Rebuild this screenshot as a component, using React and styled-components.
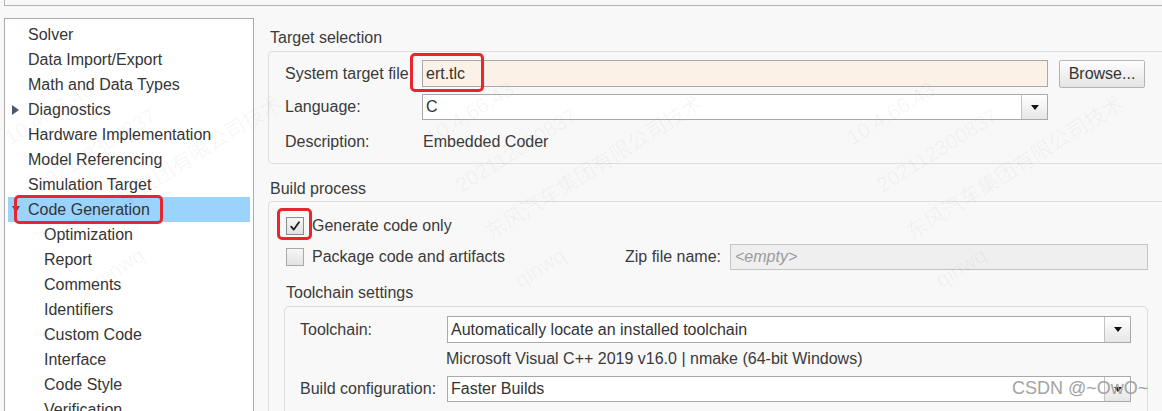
import React from "react";
import styled, { createGlobalStyle } from "styled-components";

const GlobalStyle = createGlobalStyle`
  html, body {
    margin: 0;
    padding: 0;
    background: #f8f8f8;
    overflow: hidden;
  }
  body {
    width: 1162px;
    height: 411px;
    font-family: "Liberation Sans", Arial, sans-serif;
    font-size: 16px;
    color: #3a3a3a;
  }
  #root {
    height: 411px;
    overflow: hidden;
  }
`;

const Page = styled.div`
  position: relative;
  height: 411px;
  overflow: hidden;
  display: flex;
  flex-direction: column;
`;

const TopBar = styled.div`
  flex: none;
  margin-left: 4px;
  width: 1200px;
  height: 5px;
  border: 1px solid #b3b3b3;
  border-top: none;
`;

const Main = styled.div`
  display: flex;
  align-items: flex-start;
`;

/* ---------- tree ---------- */

const Tree = styled.div`
  flex: none;
  box-sizing: border-box;
  margin: 12px 0 0 4px;
  width: 250px;
  height: 440px;
  padding: 3px;
  background: #ffffff;
  border: 1px solid #ababab;
`;

const TreeRow = styled.div`
  position: relative;
  display: flex;
  align-items: center;
  height: 25px;
  padding-left: ${(p) => (p.$child ? 20 : 4)}px;
  background: ${(p) => (p.$selected ? "#9ad3fc" : "transparent")};
  color: #353535;
  white-space: nowrap;
`;

const Twisty = styled.span`
  flex: none;
  display: flex;
  align-items: center;
  width: 16px;
  height: 25px;
  color: #4b5a6b;
`;

const Annotation = styled.div`
  position: absolute;
  box-sizing: border-box;
  border: 3px solid #e8262c;
  border-radius: 5px;
  pointer-events: none;
  z-index: 2;
`;

const RightTri = () => (
  <svg width="7" height="10" viewBox="0 0 7 10">
    <polygon points="0,0 7,5 0,10" fill="currentColor" />
  </svg>
);

const DownTri = () => (
  <svg width="8" height="7" viewBox="0 0 8 7">
    <polygon points="0,0 8,0 4,7" fill="currentColor" />
  </svg>
);

/* ---------- right pane ---------- */

const RightPane = styled.div`
  flex: none;
  width: 960px;
  padding: 22px 0 0 14px;
`;

const SectionTitle = styled.div`
  line-height: 20px;
  padding-left: 2px;
  margin-top: ${(p) => p.$gap || 0}px;
  color: #3a3a3a;
`;

const Group = styled.div`
  margin-top: ${(p) => p.$top || 3}px;
  border: 1px solid #dedede;
  border-radius: 4px;
  padding: ${(p) => p.$pad};
`;

const FormRow = styled.div`
  display: flex;
  align-items: flex-start;
  height: ${(p) => p.$h || 27}px;
  margin-top: ${(p) => p.$gap || 0}px;
`;

const Label = styled.div`
  flex: none;
  width: ${(p) => p.$w}px;
  height: ${(p) => p.$h || 27}px;
  line-height: ${(p) => p.$h || 27}px;
  white-space: nowrap;
  color: #3a3a3a;
`;

const FieldWrap = styled.div`
  position: relative;
  flex: none;
  width: ${(p) => p.$w}px;
`;

const TextInput = styled.div`
  box-sizing: border-box;
  height: 27px;
  line-height: 25px;
  padding-left: 3px;
  border: 1px solid #a9a9a9;
  background: ${(p) => p.$bg || "#ffffff"};
  color: #333;
`;

const Browse = styled.div`
  flex: none;
  box-sizing: border-box;
  margin-left: 11px;
  width: 86px;
  height: 28px;
  line-height: 26px;
  text-align: center;
  border: 1px solid #b5b5b5;
  border-radius: 2px;
  background: linear-gradient(#fefefe, #e4e4e4);
  color: #333;
`;

const SelectBox = styled.div`
  box-sizing: border-box;
  display: flex;
  width: ${(p) => p.$w}px;
  height: ${(p) => p.$h || 26}px;
  border: 1px solid #a9a9a9;
  background: #ffffff;
`;

const SelectValue = styled.div`
  flex: 1;
  padding-left: 3px;
  line-height: ${(p) => (p.$h || 26) - 2}px;
  color: #333;
  white-space: nowrap;
  overflow: hidden;
`;

const ArrowBtn = styled.div`
  flex: none;
  width: 25px;
  display: flex;
  align-items: center;
  justify-content: center;
  border-left: 1px solid #c2c2c2;
  background: linear-gradient(#ffffff, #e6e6e6);
  color: #111;
`;

const SmallArrow = () => (
  <svg width="8" height="5" viewBox="0 0 8 5">
    <polygon points="0,0 8,0 4,5" fill="currentColor" />
  </svg>
);

const Select = ({ value, w, h }) => (
  <SelectBox $w={w} $h={h}>
    <SelectValue $h={h}>{value}</SelectValue>
    <ArrowBtn>
      <SmallArrow />
    </ArrowBtn>
  </SelectBox>
);

const PlainValue = styled.div`
  line-height: 27px;
  padding-left: 1px;
  color: #3a3a3a;
`;

const CheckRow = styled.div`
  display: flex;
  align-items: center;
  width: 864px;
  height: 26px;
  margin-top: ${(p) => p.$gap || 0}px;
  padding-left: 2px;
  box-sizing: border-box;
`;

const CheckWrap = styled.div`
  position: relative;
  flex: none;
  width: 18px;
  height: 18px;
  margin-right: 8px;
`;

const CheckBox = styled.div`
  box-sizing: border-box;
  width: 18px;
  height: 18px;
  border: 1px solid ${(p) => (p.$checked ? "#8c8c8c" : "#a8a8a8")};
  background: linear-gradient(#f6f6f6, #e2e2e2);
  display: flex;
  align-items: center;
  justify-content: center;
`;

const CheckText = styled.span`
  color: #3a3a3a;
  white-space: nowrap;
`;

const ZipGroup = styled.div`
  margin-left: auto;
  display: flex;
  align-items: center;
`;

const ZipLabel = styled.span`
  margin-right: 9px;
  color: #3a3a3a;
`;

const ZipInput = styled.div`
  box-sizing: border-box;
  width: 418px;
  height: 26px;
  line-height: 24px;
  padding-left: 4px;
  border: 1px solid #c4c4c4;
  background: #efefef;
  color: #9b9b9b;
  font-style: italic;
`;

const SubGroup = styled.div`
  margin-top: 3px;
  box-sizing: border-box;
  width: 864px;
  height: 140px;
  border: 1px solid #dcdcdc;
  border-radius: 5px;
  padding: 9px 15px 0 15px;
`;

const InfoText = styled.div`
  margin: 6px 0 7px 146px;
  line-height: 20px;
  color: #3a3a3a;
  white-space: nowrap;
`;

/* ---------- overlays ---------- */

const CsdnMark = styled.div`
  position: absolute;
  left: 1012px;
  top: 377px;
  font-size: 18px;
  line-height: 22px;
  color: #a3a3a3;
  white-space: nowrap;
  pointer-events: none;
  z-index: 5;
`;

const WatermarkTile = styled.div`
  position: absolute;
  left: ${(p) => p.$x}px;
  top: ${(p) => p.$y}px;
  transform: rotate(-32deg);
  transform-origin: 0 0;
  font-family: "Liberation Sans", "Noto Sans CJK SC", sans-serif;
  font-size: 21px;
  line-height: 56px;
  color: rgba(0, 0, 0, 0.045);
  white-space: nowrap;
  pointer-events: none;
  z-index: 4;
`;

const Watermark = ({ x, y }) => (
  <WatermarkTile $x={x} $y={y}>
    <div>10.4.66.43</div>
    <div>202112300837</div>
    <div>东风汽车集团有限公司技术</div>
    <div>qinwq</div>
  </WatermarkTile>
);

const treeItems = [
  { label: "Solver" },
  { label: "Data Import/Export" },
  { label: "Math and Data Types" },
  { label: "Diagnostics", twisty: "right" },
  { label: "Hardware Implementation" },
  { label: "Model Referencing" },
  { label: "Simulation Target" },
  { label: "Code Generation", twisty: "down", selected: true, marked: true },
  { label: "Optimization", child: true },
  { label: "Report", child: true },
  { label: "Comments", child: true },
  { label: "Identifiers", child: true },
  { label: "Custom Code", child: true },
  { label: "Interface", child: true },
  { label: "Code Style", child: true },
  { label: "Verification", child: true },
  { label: "Templates", child: true },
];

export default function App() {
  return (
    <Page>
      <GlobalStyle />
      <TopBar />
      <Main>
        <Tree>
          {treeItems.map((it) => (
            <TreeRow key={it.label} $child={it.child} $selected={it.selected}>
              <Twisty>
                {it.twisty === "right" && <RightTri />}
                {it.twisty === "down" && <DownTri />}
              </Twisty>
              {it.label}
              {it.marked && (
                <Annotation style={{ left: 6, top: -2, width: 149, height: 29 }} />
              )}
            </TreeRow>
          ))}
        </Tree>

        <RightPane>
          <SectionTitle>Target selection</SectionTitle>
          <Group $top={3} $pad="8px 0 8px 16px">
            <FormRow>
              <Label $w={137}>System target file</Label>
              <FieldWrap $w={626}>
                <TextInput $bg="#fcf1e6">ert.tlc</TextInput>
                <Annotation style={{ left: -12, top: -7, width: 74, height: 39 }} />
              </FieldWrap>
              <Browse>Browse...</Browse>
            </FormRow>
            <FormRow $gap={7}>
              <Label $w={137} $h={26}>Language:</Label>
              <Select value="C" w={626} />
            </FormRow>
            <FormRow $gap={7}>
              <Label $w={137}>Description:</Label>
              <PlainValue>Embedded Coder</PlainValue>
            </FormRow>
          </Group>

          <SectionTitle $gap={15}>Build process</SectionTitle>
          <Group $top={2} $pad="11px 0 0 15px">
            <CheckRow>
              <CheckWrap>
                <CheckBox $checked>
                  <svg width="12" height="12" viewBox="0 0 12 12">
                    <path
                      d="M2.2 6.6 L4.8 9.6 L10 2.2"
                      fill="none"
                      stroke="#1e1e1e"
                      strokeWidth="1.8"
                      strokeLinecap="round"
                      strokeLinejoin="round"
                    />
                  </svg>
                </CheckBox>
                <Annotation style={{ left: -9, top: -9, width: 35, height: 32 }} />
              </CheckWrap>
              <CheckText>Generate code only</CheckText>
            </CheckRow>
            <CheckRow $gap={5}>
              <CheckWrap>
                <CheckBox />
              </CheckWrap>
              <CheckText>Package code and artifacts</CheckText>
              <ZipGroup>
                <ZipLabel>Zip file name:</ZipLabel>
                <ZipInput>&lt;empty&gt;</ZipInput>
              </ZipGroup>
            </CheckRow>

            <SectionTitle $gap={13}>Toolchain settings</SectionTitle>
            <SubGroup>
              <FormRow>
                <Label $w={147}>Toolchain:</Label>
                <Select
                  value="Automatically locate an installed toolchain"
                  w={684}
                  h={27}
                />
              </FormRow>
              <InfoText>Microsoft Visual C++ 2019 v16.0 | nmake (64-bit Windows)</InfoText>
              <FormRow $h={26}>
                <Label $w={147} $h={26}>Build configuration:</Label>
                <Select value="Faster Builds" w={684} />
              </FormRow>
            </SubGroup>
          </Group>
        </RightPane>
      </Main>

      <Watermark x={-8} y={116} />
      <Watermark x={413} y={116} />
      <Watermark x={834} y={116} />
      <CsdnMark>CSDN @~OwO~</CsdnMark>
    </Page>
  );
}
